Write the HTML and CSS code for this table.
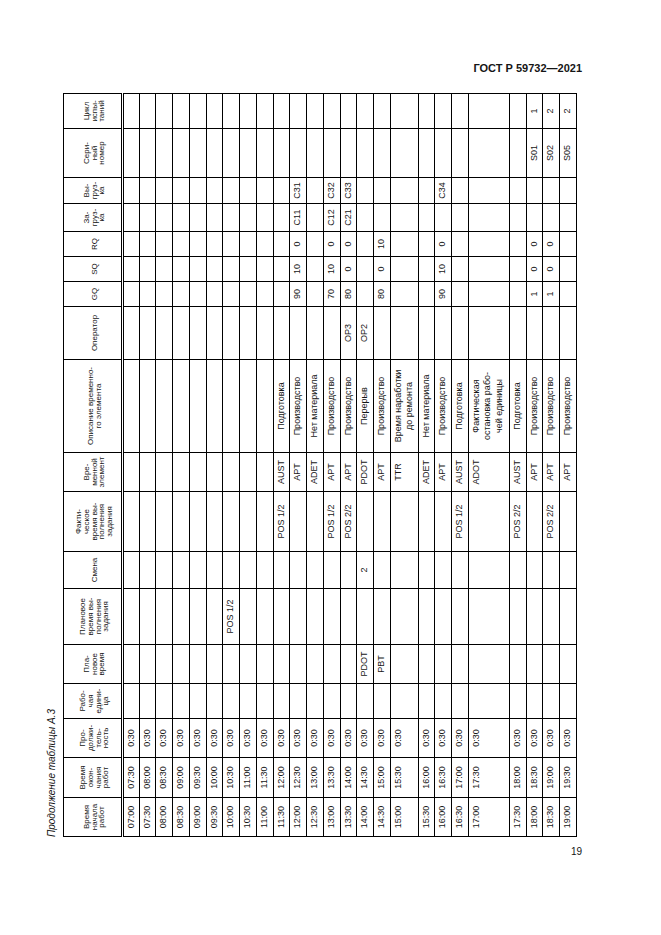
FILE: index.html
```html
<!DOCTYPE html>
<html lang="ru">
<head>
<meta charset="utf-8">
<title>ГОСТ Р 59732—2021</title>
<link rel="stylesheet" href="styles.css">
</head>
<body>
<div class="page">
  <div class="doc-header">ГОСТ Р 59732—2021</div>
  <div class="figure-slot">
    <div class="figure-rot">
      <div class="caption">Продолжение таблицы А.3</div>
      <table class="grid">
        <colgroup>
          <col class="w39"><col class="w40"><col class="w39"><col class="w35"><col class="w39"><col class="w56">
          <col class="w37"><col class="w60"><col class="w39"><col class="w93"><col class="w53"><col class="w25">
          <col class="w25"><col class="w25"><col class="w28"><col class="w26"><col class="w49"><col class="w35">
        </colgroup>
        <thead>
          <tr class="hr">
            <th>Время<br>начала<br>работ</th>
            <th>Время<br>окон-<br>чания<br>работ</th>
            <th>Про-<br>должи-<br>тель-<br>ность</th>
            <th>Рабо-<br>чая<br>едини-<br>ца</th>
            <th>Пла-<br>новое<br>время</th>
            <th>Плановое<br>время вы-<br>полнения<br>задания</th>
            <th>Смена</th>
            <th>Факти-<br>ческое<br>время вы-<br>полнения<br>задания</th>
            <th>Вре-<br>менной<br>элемент</th>
            <th>Описание временно-<br>го элемента</th>
            <th>Оператор</th>
            <th>GQ</th>
            <th>SQ</th>
            <th>RQ</th>
            <th>За-<br>груз-<br>ка</th>
            <th>Вы-<br>груз-<br>ка</th>
            <th>Сери-<br>ный<br>номер</th>
            <th>Цикл<br>испы-<br>таний</th>
          </tr>
        </thead>
        <tbody>
          <tr class="r"><td>07:00</td><td>07:30</td><td>0:30</td><td></td><td></td><td></td><td></td><td></td><td></td><td></td><td></td><td></td><td></td><td></td><td></td><td></td><td></td><td></td></tr>
          <tr class="r"><td>07:30</td><td>08:00</td><td>0:30</td><td></td><td></td><td></td><td></td><td></td><td></td><td></td><td></td><td></td><td></td><td></td><td></td><td></td><td></td><td></td></tr>
          <tr class="r"><td>08:00</td><td>08:30</td><td>0:30</td><td></td><td></td><td></td><td></td><td></td><td></td><td></td><td></td><td></td><td></td><td></td><td></td><td></td><td></td><td></td></tr>
          <tr class="r"><td>08:30</td><td>09:00</td><td>0:30</td><td></td><td></td><td></td><td></td><td></td><td></td><td></td><td></td><td></td><td></td><td></td><td></td><td></td><td></td><td></td></tr>
          <tr class="r"><td>09:00</td><td>09:30</td><td>0:30</td><td></td><td></td><td></td><td></td><td></td><td></td><td></td><td></td><td></td><td></td><td></td><td></td><td></td><td></td><td></td></tr>
          <tr class="r"><td>09:30</td><td>10:00</td><td>0:30</td><td></td><td></td><td></td><td></td><td></td><td></td><td></td><td></td><td></td><td></td><td></td><td></td><td></td><td></td><td></td></tr>
          <tr class="r"><td>10:00</td><td>10:30</td><td>0:30</td><td></td><td></td><td>POS 1/2</td><td></td><td></td><td></td><td></td><td></td><td></td><td></td><td></td><td></td><td></td><td></td><td></td></tr>
          <tr class="r"><td>10:30</td><td>11:00</td><td>0:30</td><td></td><td></td><td></td><td></td><td></td><td></td><td></td><td></td><td></td><td></td><td></td><td></td><td></td><td></td><td></td></tr>
          <tr class="r"><td>11:00</td><td>11:30</td><td>0:30</td><td></td><td></td><td></td><td></td><td></td><td></td><td></td><td></td><td></td><td></td><td></td><td></td><td></td><td></td><td></td></tr>
          <tr class="r"><td>11:30</td><td>12:00</td><td>0:30</td><td></td><td></td><td></td><td></td><td>POS 1/2</td><td>AUST</td><td>Подготовка</td><td></td><td></td><td></td><td></td><td></td><td></td><td></td><td></td></tr>
          <tr class="r"><td>12:00</td><td>12:30</td><td>0:30</td><td></td><td></td><td></td><td></td><td></td><td>APT</td><td>Производство</td><td></td><td>90</td><td>10</td><td>0</td><td>C11</td><td>C31</td><td></td><td></td></tr>
          <tr class="r"><td>12:30</td><td>13:00</td><td>0:30</td><td></td><td></td><td></td><td></td><td></td><td>ADET</td><td>Нет материала</td><td></td><td></td><td></td><td></td><td></td><td></td><td></td><td></td></tr>
          <tr class="r"><td>13:00</td><td>13:30</td><td>0:30</td><td></td><td></td><td></td><td></td><td>POS 1/2</td><td>APT</td><td>Производство</td><td></td><td>70</td><td>10</td><td>0</td><td>C12</td><td>C32</td><td></td><td></td></tr>
          <tr class="r"><td>13:30</td><td>14:00</td><td>0:30</td><td></td><td></td><td></td><td></td><td>POS 2/2</td><td>APT</td><td>Производство</td><td>OP3</td><td>80</td><td>0</td><td>0</td><td>C21</td><td>C33</td><td></td><td></td></tr>
          <tr class="r"><td>14:00</td><td>14:30</td><td>0:30</td><td></td><td>PDOT</td><td></td><td>2</td><td></td><td>PDOT</td><td>Перерыв</td><td>OP2</td><td></td><td></td><td></td><td></td><td></td><td></td><td></td></tr>
          <tr class="r"><td>14:30</td><td>15:00</td><td>0:30</td><td></td><td>PBT</td><td></td><td></td><td></td><td>APT</td><td>Производство</td><td></td><td>80</td><td>0</td><td>10</td><td></td><td></td><td></td><td></td></tr>
          <tr class="r2"><td>15:00</td><td>15:30</td><td>0:30</td><td></td><td></td><td></td><td></td><td></td><td>TTR</td><td>Время наработки<br>до ремонта</td><td></td><td></td><td></td><td></td><td></td><td></td><td></td><td></td></tr>
          <tr class="r"><td>15:30</td><td>16:00</td><td>0:30</td><td></td><td></td><td></td><td></td><td></td><td>ADET</td><td>Нет материала</td><td></td><td></td><td></td><td></td><td></td><td></td><td></td><td></td></tr>
          <tr class="r"><td>16:00</td><td>16:30</td><td>0:30</td><td></td><td></td><td></td><td></td><td></td><td>APT</td><td>Производство</td><td></td><td>90</td><td>10</td><td>0</td><td></td><td>C34</td><td></td><td></td></tr>
          <tr class="r"><td>16:30</td><td>17:00</td><td>0:30</td><td></td><td></td><td></td><td></td><td>POS 1/2</td><td>AUST</td><td>Подготовка</td><td></td><td></td><td></td><td></td><td></td><td></td><td></td><td></td></tr>
          <tr class="r3"><td>17:00</td><td>17:30</td><td>0:30</td><td></td><td></td><td></td><td></td><td></td><td>ADOT</td><td>Фактическая<br>остановка рабо-<br>чей единицы</td><td></td><td></td><td></td><td></td><td></td><td></td><td></td><td></td></tr>
          <tr class="r"><td>17:30</td><td>18:00</td><td>0:30</td><td></td><td></td><td></td><td></td><td>POS 2/2</td><td>AUST</td><td>Подготовка</td><td></td><td></td><td></td><td></td><td></td><td></td><td></td><td></td></tr>
          <tr class="r"><td>18:00</td><td>18:30</td><td>0:30</td><td></td><td></td><td></td><td></td><td></td><td>APT</td><td>Производство</td><td></td><td>1</td><td>0</td><td>0</td><td></td><td></td><td>S01</td><td>1</td></tr>
          <tr class="r"><td>18:30</td><td>19:00</td><td>0:30</td><td></td><td></td><td></td><td></td><td>POS 2/2</td><td>APT</td><td>Производство</td><td></td><td>1</td><td>0</td><td>0</td><td></td><td></td><td>S02</td><td>2</td></tr>
          <tr class="r"><td>19:00</td><td>19:30</td><td>0:30</td><td></td><td></td><td></td><td></td><td></td><td>APT</td><td>Производство</td><td></td><td></td><td></td><td></td><td></td><td></td><td>S05</td><td>2</td></tr>
        </tbody>
      </table>
    </div>
  </div>
  <div class="page-num">19</div>
</div>
</body>
</html>
```

FILE: styles.css
```css
* { box-sizing: border-box; }
html, body { margin: 0; padding: 0; background: #fff; }
body { font-family: "Liberation Sans", Arial, sans-serif; color: #151515; }

.page {
  width: 661px;
  height: 935px;
  padding: 61px 79px 0 38px;
  overflow: hidden;
}

.doc-header {
  text-align: right;
  font-weight: bold;
  font-size: 11px;
  line-height: 14px;
  height: 14px;
}

.figure-slot {
  width: 539px;
  height: 743px;
  margin-top: 19px;
}

.figure-rot {
  width: 743px;
  height: 539px;
  transform-origin: 0 0;
  transform: translateY(743px) rotate(-90deg);
}

.caption {
  height: 25px;
  padding-top: 3px;
  font-style: italic;
  font-size: 10px;
  line-height: 22px;
}

.grid {
  width: 743px;
  table-layout: fixed;
  border-collapse: collapse;
}

.w25 { width: 25px; }
.w26 { width: 26px; }
.w28 { width: 28px; }
.w35 { width: 35px; }
.w37 { width: 37px; }
.w39 { width: 39px; }
.w40 { width: 40px; }
.w49 { width: 49px; }
.w53 { width: 53px; }
.w56 { width: 56px; }
.w60 { width: 60px; }
.w93 { width: 93px; }

.grid th,
.grid td {
  border: 1px solid #000;
  padding: 0 1px;
  text-align: center;
  overflow: hidden;
  white-space: nowrap;
}

.grid th {
  font-weight: normal;
  font-size: 8px;
  line-height: 7.8px;
  vertical-align: middle;
  padding-top: 4px;
  border-bottom: 3px double #000;
}

.grid tr.hr { height: 59px; }

.grid td {
  font-size: 9px;
  line-height: 11.5px;
  vertical-align: top;
  padding-top: 2px;
}

.grid tr.r { height: 16.74px; }
.grid tr.r2 { height: 28px; }
.grid tr.r3 { height: 41px; }

.page-num {
  text-align: right;
  font-size: 10px;
  line-height: 12px;
  margin-top: 9px;
}
```
